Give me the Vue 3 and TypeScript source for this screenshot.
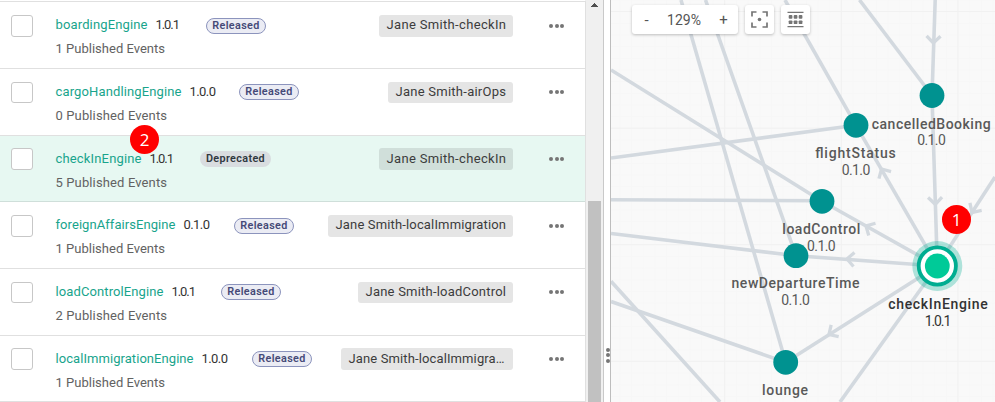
<script setup lang="ts">
interface Engine {
  name: string
  version: string
  status: 'Released' | 'Deprecated'
  events: number
  owner: string
  nameWidth: number
  statusGap: number
  ownerWidth: number
}

interface GraphNode {
  x: number
  y: number
  name: string
  version: string
  labelX: number
  labelY: number
  labelWidth: number
  versionX: number
  versionY: number
  selected?: boolean
}

const engines: Engine[] = [
  { name: 'boardingEngine', version: '1.0.1', status: 'Released', events: 1, owner: 'Jane Smith-checkIn', nameWidth: 92, statusGap: 26, ownerWidth: 134 },
  { name: 'cargoHandlingEngine', version: '1.0.0', status: 'Released', events: 0, owner: 'Jane Smith-airOps', nameWidth: 126, statusGap: 25, ownerWidth: 125 },
  { name: 'checkInEngine', version: '1.0.1', status: 'Deprecated', events: 5, owner: 'Jane Smith-checkIn', nameWidth: 86, statusGap: 26, ownerWidth: 134 },
  { name: 'foreignAffairsEngine', version: '0.1.0', status: 'Released', events: 1, owner: 'Jane Smith-localImmigration', nameWidth: 120, statusGap: 26, ownerWidth: 185 },
  { name: 'loadControlEngine', version: '1.0.1', status: 'Released', events: 2, owner: 'Jane Smith-loadControl', nameWidth: 108, statusGap: 25, ownerWidth: 155 },
  { name: 'localImmigrationEngine', version: '1.0.0', status: 'Released', events: 1, owner: 'Jane Smith-localImmigra…', nameWidth: 138, statusGap: 26, ownerWidth: 172 },
]

const nodes: GraphNode[] = [
  { x: 932, y: 95.5, name: 'cancelledBooking', version: '0.1.0', labelX: 931.2, labelY: 128.5, labelWidth: 119, versionX: 931.5, versionY: 145 },
  { x: 856, y: 125.3, name: 'flightStatus', version: '0.1.0', labelX: 855.5, labelY: 158, labelWidth: 80.5, versionX: 856, versionY: 174.5 },
  { x: 822, y: 201.3, name: 'loadControl', version: '0.1.0', labelX: 821.3, labelY: 234, labelWidth: 78, versionX: 821.3, versionY: 251 },
  { x: 796, y: 255.7, name: 'newDepartureTime', version: '0.1.0', labelX: 795.5, labelY: 288, labelWidth: 128, versionX: 795.5, versionY: 305 },
  { x: 785.7, y: 362.3, name: 'lounge', version: '', labelX: 785, labelY: 395, labelWidth: 46, versionX: 785, versionY: 412 },
  { x: 937.3, y: 266, name: 'checkInEngine', version: '1.0.1', labelX: 938, labelY: 309, labelWidth: 99.5, versionX: 938, versionY: 326, selected: true },
]

const edges: number[][] = [
  [681, 0, 785.7, 362.3],
  [705.5, 0, 796, 255.7],
  [785, 0, 856, 125.3],
  [859.5, 0, 932, 95.5],
  [935.2, 0, 932, 95.5],
  [611, 70, 822, 201.3],
  [611, 158, 856, 125.3],
  [611, 199.8, 822, 200.8],
  [611, 233.5, 796, 255.7],
  [611, 281.2, 720, 402],
  [611, 301.5, 785.7, 362.3],
  [932, 95.5, 937.3, 266],
  [937.3, 266, 856, 125.3],
  [937.3, 266, 822, 201.3],
  [937.3, 266, 796, 255.7],
  [937.3, 266, 785.7, 362.3],
  [995, 177, 937.3, 266],
  [937.3, 266, 840, 402],
]

// tip x, tip y, rotation in degrees (0 points right)
const arrows: number[][] = [
  [933.3, 43, 92],
  [935.3, 204.3, 88],
  [881.5, 169, 240],
  [866, 226, 209],
  [847, 259, 184],
  [829, 334.5, 147.5],
  [972, 212.5, 123],
]
</script>

<template>
  <main class="screen">
    <section class="list">
      <article v-for="e in engines" :key="e.name" class="row" :class="{ active: e.status === 'Deprecated' }">
        <span class="check"></span>
        <div class="info">
          <div class="title">
            <svg class="name" :width="e.nameWidth" height="18">
              <text x="-0.5" y="13" :textLength="e.nameWidth">{{ e.name }}</text>
            </svg>
            <svg class="version" width="24" height="18"><text x="-0.5" y="13" :textLength="e.version === '1.0.1' ? 24.5 : 26.5">{{ e.version }}</text></svg>
            <span class="badge" :class="e.status.toLowerCase()" :style="{ marginLeft: e.statusGap + 'px' }">{{ e.status }}</span>
            <span v-if="e.status === 'Deprecated'" class="marker row-marker">2</span>
          </div>
          <div class="events">
            <svg width="114" height="18">
              <text x="-0.5" y="13" :textLength="e.events === 1 ? 109.5 : 111.5">{{ e.events }} Published Events</text>
            </svg>
          </div>
        </div>
        <div class="owner">
          <svg :width="e.ownerWidth" height="21">
            <text x="7.5" y="14" :textLength="e.ownerWidth - (e.owner.endsWith('…') ? 16 : 14.5)">{{ e.owner }}</text>
          </svg>
        </div>
        <span class="more"><i></i><i></i><i></i></span>
      </article>
    </section>

    <div class="scrollbar">
      <svg class="up" width="7" height="4" viewBox="0 0 7 4"><path d="M0 4V3H1V2H2V1H3V0H4V1H5V2H6V3H7V4z" fill="#505050" shape-rendering="crispEdges" /></svg>
      <div class="thumb"></div>
    </div>
    <div class="splitter"><span class="grip"><i></i><i></i><i></i></span></div>

    <section class="graph">
      <svg class="canvas" width="384" height="402" viewBox="611 0 384 402">
        <defs>
          <pattern id="minor" x="724.4" y="11.2" width="11.66" height="11.66" patternUnits="userSpaceOnUse">
            <path d="M0 .5H11.66M.5 0V11.66" stroke="#f7f7f7" fill="none" />
          </pattern>
          <pattern id="major" x="724.2" y="11" width="116.6" height="116.6" patternUnits="userSpaceOnUse">
            <path d="M0 .5H116.6M.5 0V116.6" stroke="#f1f1f1" fill="none" />
          </pattern>
        </defs>
        <rect x="611" width="384" height="402" fill="#f9f9f9" />
        <rect x="611" width="384" height="402" fill="url(#minor)" />
        <rect x="611" width="384" height="402" fill="url(#major)" />
        <g stroke="#d3d9df" stroke-width="3.6" fill="none">
          <line v-for="(l, i) in edges" :key="i" :x1="l[0]" :y1="l[1]" :x2="l[2]" :y2="l[3]" />
          <path v-for="(a, i) in arrows" :key="'a' + i" d="M-7 -7 0 0 -7 7" :transform="`translate(${a[0]} ${a[1]}) rotate(${a[2]})`" stroke-width="3.3" />
        </g>
        <g v-for="n in nodes" :key="n.name">
          <template v-if="n.selected">
            <circle :cx="n.x" :cy="n.y" r="25" fill="#00ad91" fill-opacity=".3" />
            <circle :cx="n.x" :cy="n.y" r="18.6" fill="#fff" stroke="#00ad91" stroke-width="3.8" />
            <circle :cx="n.x" :cy="n.y" r="12.4" fill="#00ca98" />
          </template>
          <circle v-else :cx="n.x" :cy="n.y" r="12.4" fill="#009290" />
        </g>
        <g v-for="n in nodes" :key="'t' + n.name" class="label" :class="{ chosen: n.selected }">
          <text class="strong" :x="n.labelX - n.labelWidth / 2" :y="n.labelY" :textLength="n.labelWidth">{{ n.name }}</text>
          <text v-if="n.version" :x="n.versionX - (n.selected ? 13.2 : 14.2)" :y="n.versionY" :textLength="n.selected ? 26.5 : 28.5">{{ n.version }}</text>
        </g>
      </svg>
      <div class="toolbar">
        <div class="zoom"><span class="sign">-</span><span class="value">129%</span><span class="sign">+</span></div>
        <div class="tool">
          <svg width="17" height="17" viewBox="0 0 17 17">
            <path d="M1 5.5V1H5.5M11.5 1H16V5.5M16 11.5V16H11.5M5.5 16H1V11.5" fill="none" stroke="#757575" stroke-width="1.7" />
            <circle cx="8.5" cy="8.5" r="1.8" fill="#757575" />
          </svg>
        </div>
        <div class="tool">
          <svg width="17" height="17" viewBox="0 0 17 17" fill="#757575">
            <path d="M.5 .7H16.5V2H.5zM.5 15H16.5V16.3H.5z" />
            <rect v-for="i in 6" :key="i" :x="1.7 + ((i - 1) % 3) * 5" :y="i < 4 ? 4 : 9.4" width="3.7" height="3.7" rx=".9" />
          </svg>
        </div>
      </div>
      <span class="marker graph-marker">1</span>
    </section>
  </main>
</template>

<style>
body {
  margin: 0;
  overflow: hidden;
}
</style>

<style scoped>
.screen {
  display: flex;
  width: 995px;
  height: 402px;
  overflow: hidden;
  background: #fff;
  font-family: Roboto, "Liberation Sans", sans-serif;
  font-size: 13px;
  color: #333;
}
.list {
  box-sizing: border-box;
  width: 586px;
  padding-top: 1px;
  display: grid;
  grid-template-rows: 67px 67px 66px 67px 67px 66px;
  border-top: 1px solid #fff;
  border-right: 1px solid #e0e0e0;
  background: linear-gradient(#e0e0e0, #e0e0e0) 0 0 / 100% 1px no-repeat;
}
.row {
  box-sizing: border-box;
  display: flex;
  align-items: flex-start;
  padding: 13px 21px 0 11px;
  border-bottom: 1px solid #e0e0e0;
}
.row.active {
  background: #e7f8f2;
  border-bottom-color: #cfdfda;
}
.row.active .check {
  background: #fff;
}
.row.active .owner {
  background: #d0dfda;
}
.check {
  box-sizing: border-box;
  width: 22px;
  height: 22px;
  border: 1px solid #c7c7c7;
  border-radius: 3px;
}
.info {
  flex: 1;
  margin-left: 23px;
}
.info svg,
.owner svg {
  display: block;
  overflow: visible;
}
.title {
  position: relative;
  display: flex;
  height: 25px;
  padding-top: 1px;
  box-sizing: border-box;
}
.name {
  fill: #18a48c;
}
.version {
  margin-left: 8px;
  fill: #333;
}
.events {
  fill: #626262;
}
.badge {
  box-sizing: border-box;
  height: 16px;
  margin-top: 2px;
  border-radius: 8px;
  font-size: 10.8px;
  line-height: 14px;
  font-weight: 600;
  letter-spacing: 0.36px;
  text-align: center;
}
.released {
  width: 60px;
  border: 1px solid #8c94bd;
  background: #ebecf4;
  color: #454977;
}
.deprecated {
  width: 71px;
  line-height: 16px;
  background: #d9dde0;
  color: #303840;
}
.owner {
  height: 22px;
  margin-right: 36px;
  border-radius: 3px;
  background: #e5e5e5;
  fill: #3c3c3c;
}
.more {
  display: flex;
  gap: 1.3px;
  margin-top: 9px;
}
.more i {
  width: 4.1px;
  height: 4.1px;
  border-radius: 50%;
  background: #757575;
}
.row:nth-child(3n + 2) .check,
.row:nth-child(3n + 2) .owner {
  height: 21px;
}
.row:nth-child(3n) .check {
  margin-top: -1px;
}
.row:nth-child(3n) .owner {
  box-sizing: border-box;
  margin-top: -1px;
  padding-top: 1px;
}
.row:not(:nth-child(3n + 1)) .badge {
  margin-top: 1px;
}
.row:not(:nth-child(3n + 1)) .more {
  margin-top: 8px;
}
.scrollbar {
  box-sizing: border-box;
  width: 18px;
  display: flex;
  flex-direction: column;
  padding: 3px 2px 0;
  border-right: 1px solid #c9c9c9;
  background: #f0f0f0;
}
.up {
  margin-left: 3px;
  flex: none;
}
.thumb {
  width: 13px;
  flex: 1;
  margin-top: 194px;
  background: #c1c1c1;
}
.splitter {
  box-sizing: border-box;
  width: 7px;
  padding-top: 348px;
  border-right: 1px solid #bdbdbd;
  background: #fff;
}
.grip {
  position: relative;
  z-index: 1;
  display: flex;
  flex-direction: column;
  gap: 1.3px;
  margin-left: 2px;
}
.grip i {
  width: 4px;
  height: 4px;
  border-radius: 50%;
  background: #757575;
}
.graph {
  position: relative;
  width: 384px;
  height: 402px;
}
.canvas {
  display: block;
}
.label {
  font-size: 14px;
  fill: #595959;
}
.label.chosen {
  fill: #333;
}
.strong {
  font-weight: 500;
}
.toolbar {
  position: absolute;
  top: 5px;
  left: 21px;
  display: flex;
  gap: 7px;
}
.zoom,
.tool {
  height: 29px;
  display: flex;
  align-items: center;
  border-radius: 3px;
  background: #fff;
  box-shadow: 0 1px 3px rgba(0, 0, 0, 0.24);
}
.zoom {
  width: 106px;
  font-size: 14px;
  color: #555;
}
.sign {
  width: 29px;
  text-align: center;
  font-size: 15px;
}
.value {
  flex: 1;
  margin-left: -2px;
  text-align: center;
}
.tool {
  width: 29px;
  justify-content: center;
}
.marker {
  position: absolute;
  width: 29px;
  height: 29px;
  border-radius: 50%;
  background: #f00;
  color: #fff;
  font: 17px/29px "Open Sans", sans-serif;
  text-align: center;
}
.row-marker {
  top: -24px;
  left: 74px;
}
.graph-marker {
  top: 205px;
  left: 331px;
}
</style>
